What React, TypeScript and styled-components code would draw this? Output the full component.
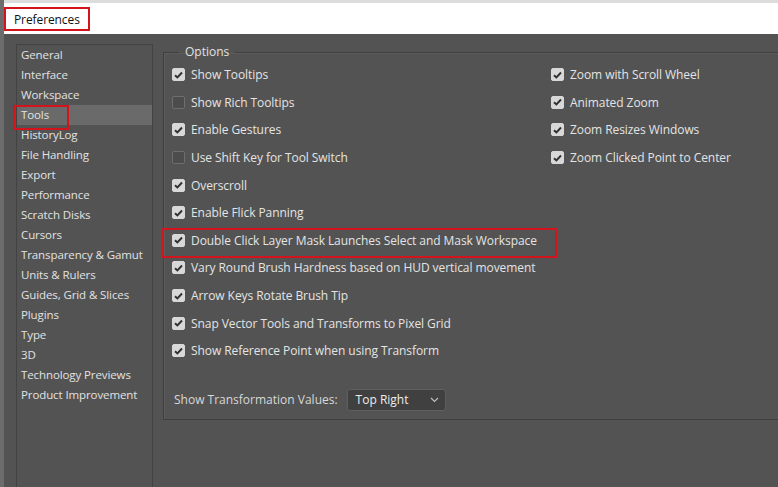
import React from 'react';
import styled, { createGlobalStyle } from 'styled-components';

const GlobalStyle = createGlobalStyle`
  html, body {
    margin: 0;
    padding: 0;
    background: #535353;
  }
  * {
    box-sizing: border-box;
  }
`;

const sidebarItems = [
  'General',
  'Interface',
  'Workspace',
  'Tools',
  'HistoryLog',
  'File Handling',
  'Export',
  'Performance',
  'Scratch Disks',
  'Cursors',
  'Transparency & Gamut',
  'Units & Rulers',
  'Guides, Grid & Slices',
  'Plugins',
  'Type',
  '3D',
  'Technology Previews',
  'Product Improvement',
];

const leftOptions = [
  { label: 'Show Tooltips', checked: true },
  { label: 'Show Rich Tooltips', checked: false },
  { label: 'Enable Gestures', checked: true },
  { label: 'Use Shift Key for Tool Switch', checked: false },
  { label: 'Overscroll', checked: true },
  { label: 'Enable Flick Panning', checked: true },
  { label: 'Double Click Layer Mask Launches Select and Mask Workspace', checked: true, marked: true },
  { label: 'Vary Round Brush Hardness based on HUD vertical movement', checked: true },
  { label: 'Arrow Keys Rotate Brush Tip', checked: true },
  { label: 'Snap Vector Tools and Transforms to Pixel Grid', checked: true },
  { label: 'Show Reference Point when using Transform', checked: true },
];

const rightOptions = [
  { label: 'Zoom with Scroll Wheel', checked: true },
  { label: 'Animated Zoom', checked: true },
  { label: 'Zoom Resizes Windows', checked: true },
  { label: 'Zoom Clicked Point to Center', checked: true },
];

const Window = styled.div`
  width: 778px;
  height: 487px;
  display: flex;
  flex-direction: column;
  border-left: 4px solid #6c6c6c;
  font-family: 'Open Sans', 'Noto Sans', sans-serif;
  overflow: hidden;
`;

const TitleBar = styled.div`
  height: 34px;
  flex: none;
  background: #ffffff;
  border-top: 3px solid #dcdcdc;
  padding-top: 4px;
  display: flex;
  align-items: flex-start;
`;

const Title = styled.span`
  height: 24px;
  line-height: 21px;
  padding: 0 8px;
  border: 2px solid #d3141c;
  font-size: 12px;
  color: #111111;
  letter-spacing: -0.1px;
`;

const Body = styled.div`
  flex: 1;
  display: flex;
  padding-top: 10px;
  background: #535353;
  min-height: 0;
`;

const Sidebar = styled.ul`
  list-style: none;
  margin: 0 0 0 12px;
  padding: 0;
  width: 137px;
  flex: none;
  border: 1px solid #434343;
  border-bottom: none;
`;

const SidebarItem = styled.li<{ $active?: boolean }>`
  position: relative;
  height: 20px;
  line-height: 20px;
  padding-left: 4px;
  font-size: 11.5px;
  color: #e2e2e2;
  white-space: nowrap;
  letter-spacing: -0.1px;
  background: ${({ $active }) => ($active ? '#6a6a6a' : 'transparent')};

  &::after {
    content: '';
    display: ${({ $active }) => ($active ? 'block' : 'none')};
    position: absolute;
    left: -4px;
    top: 0;
    width: 52px;
    height: 21px;
    border: 2px solid #d3141c;
  }
`;

const Content = styled.div`
  flex: 1;
  padding-left: 10px;
  overflow: hidden;
`;

const Group = styled.fieldset`
  width: 640px;
  margin: 0;
  padding: 0 0 8px 0;
  border: 1px solid #3f3f3f;
  box-shadow: inset 1px 1px 0 #5c5c5c;
`;

const Legend = styled.legend`
  margin-left: 15px;
  padding: 0 6px;
  font-size: 12px;
  line-height: 16px;
  color: #e2e2e2;
`;

const Columns = styled.div`
  display: grid;
  grid-template-columns: 379px 1fr;
  padding: 1px 0 0 8px;
`;

const Column = styled.div`
  display: flex;
  flex-direction: column;
`;

const Row = styled.label<{ $marked?: boolean }>`
  position: relative;
  height: 27.6px;
  display: flex;
  align-items: center;
  gap: 6px;
  font-size: 12px;
  color: #e4e4e4;
  white-space: nowrap;
  letter-spacing: -0.07px;

  &::after {
    content: '';
    display: ${({ $marked }) => ($marked ? 'block' : 'none')};
    position: absolute;
    left: -10px;
    top: 1px;
    width: 391px;
    height: 26px;
    border: 2px solid #d3141c;
  }
`;

const Box = styled.span<{ $checked: boolean }>`
  width: 13px;
  height: 13px;
  flex: none;
  border-radius: 2px;
  display: flex;
  align-items: center;
  justify-content: center;
  background: ${({ $checked }) => ($checked ? '#d8d8d8' : '#4c4c4c')};
  border: 1px solid ${({ $checked }) => ($checked ? '#d8d8d8' : '#6e6e6e')};
`;

const ValuesRow = styled.div`
  display: flex;
  align-items: center;
  gap: 9px;
  margin-top: 24px;
  padding-left: 10px;
  font-size: 12px;
  color: #d8d8d8;
`;

const Select = styled.div`
  width: 99px;
  height: 22px;
  display: flex;
  align-items: center;
  justify-content: space-between;
  padding: 0 6px 0 8px;
  background: #404040;
  border: 1px solid #5f5f5f;
  border-radius: 3px;
  color: #ececec;
  font-size: 12px;
`;

const CheckMark = () => (
  <svg width="9" height="8" viewBox="0 0 9 8">
    <path d="M1 4.2 L3.4 6.5 L8 1.5" fill="none" stroke="#2f2f2f" strokeWidth="1.9" />
  </svg>
);

const Chevron = () => (
  <svg width="9" height="6" viewBox="0 0 9 6">
    <path d="M1 1 L4.5 4.5 L8 1" fill="none" stroke="#bdbdbd" strokeWidth="1.2" />
  </svg>
);

const Option = ({ label, checked, marked }: { label: string; checked: boolean; marked?: boolean }) => (
  <Row $marked={marked}>
    <Box $checked={checked}>{checked && <CheckMark />}</Box>
    {label}
  </Row>
);

const App = () => {
  return (
    <>
      <GlobalStyle />
      <Window>
        <TitleBar>
          <Title>Preferences</Title>
        </TitleBar>
        <Body>
          <Sidebar>
            {sidebarItems.map((item) => (
              <SidebarItem key={item} $active={item === 'Tools'}>
                {item}
              </SidebarItem>
            ))}
          </Sidebar>
          <Content>
            <Group>
              <Legend>Options</Legend>
              <Columns>
                <Column>
                  {leftOptions.map((opt) => (
                    <Option key={opt.label} {...opt} />
                  ))}
                </Column>
                <Column>
                  {rightOptions.map((opt) => (
                    <Option key={opt.label} {...opt} />
                  ))}
                </Column>
              </Columns>
              <ValuesRow>
                Show Transformation Values:
                <Select>
                  Top Right
                  <Chevron />
                </Select>
              </ValuesRow>
            </Group>
          </Content>
        </Body>
      </Window>
    </>
  );
};

export default App;
